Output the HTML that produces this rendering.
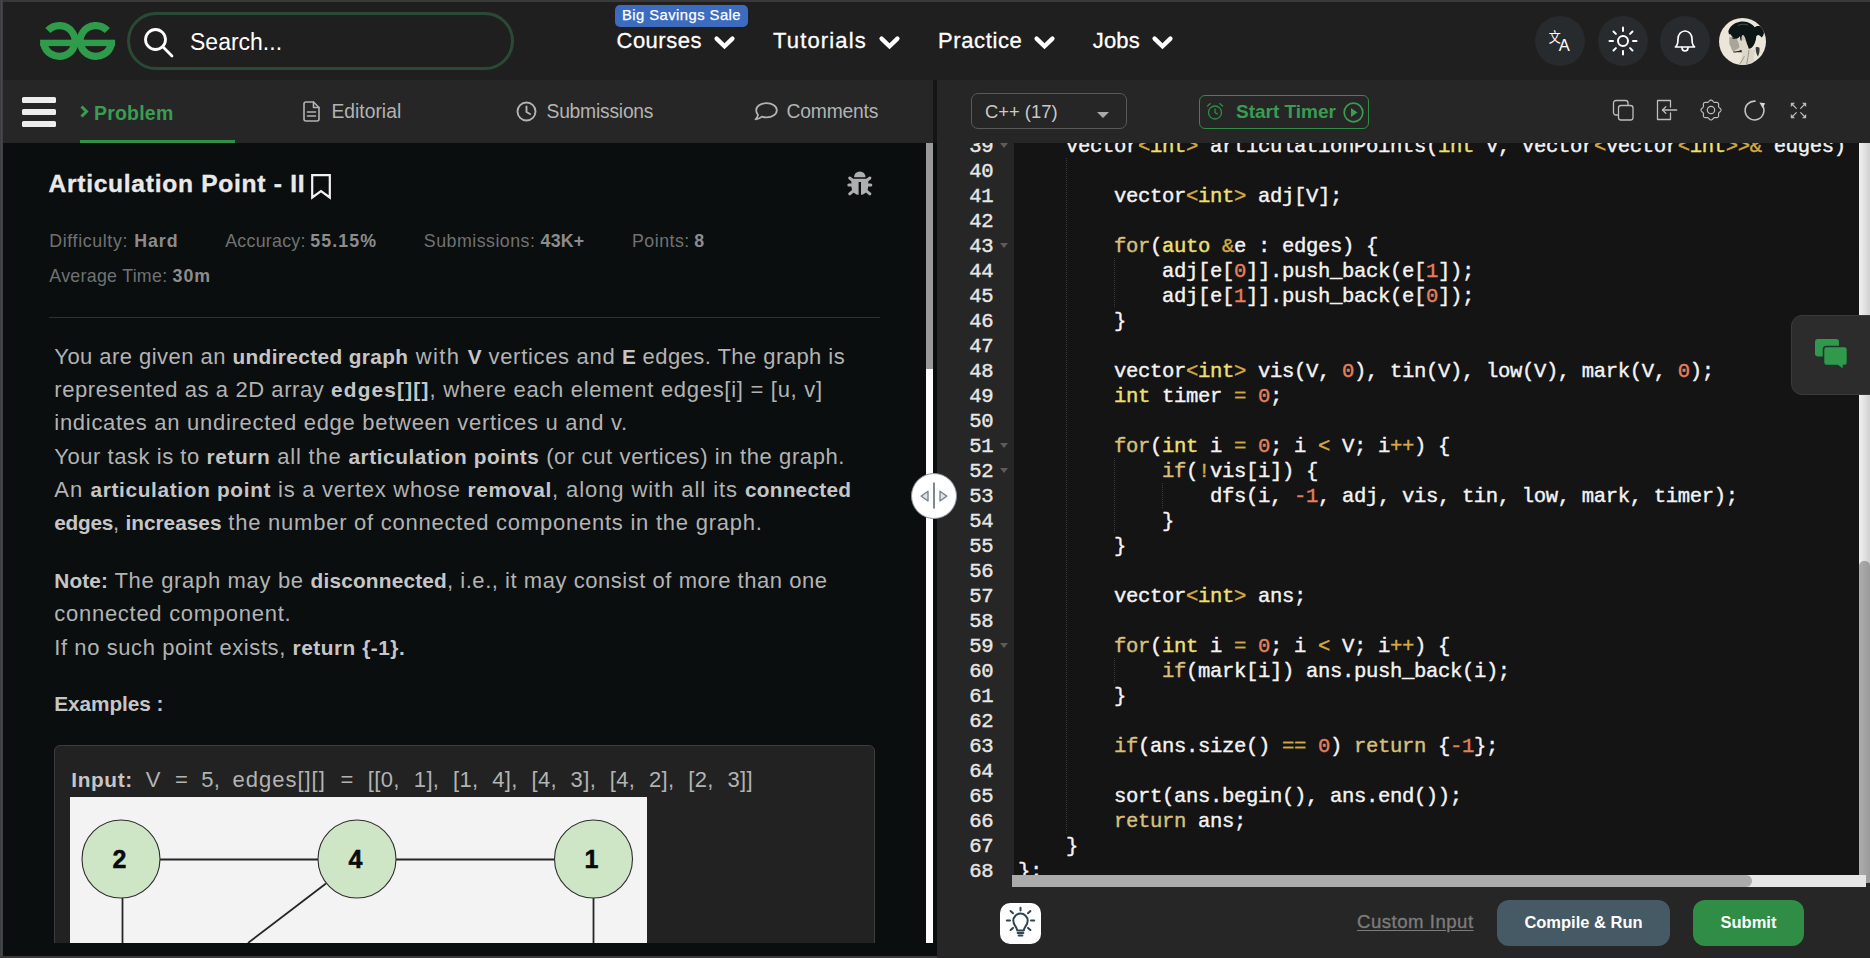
<!DOCTYPE html>
<html lang="en">
<head>
<meta charset="utf-8">
<title>Articulation Point - II | Practice | GeeksforGeeks</title>
<style>
*{box-sizing:border-box;margin:0;padding:0}
html,body{width:1870px;height:958px;overflow:hidden;background:#262626}
body{position:relative;font-family:"Liberation Sans",sans-serif;color:#fff}
.abs{position:absolute}
svg{display:block;overflow:visible}
/* window frame */
#frameTop{left:0;top:0;width:1870px;height:2px;background:#39393c}
#frameLeft{left:0;top:0;width:3px;height:958px;background:linear-gradient(to right,#38393c,#47484b 50%,#3a3b3e)}
#frameBot{left:0;top:956px;width:937px;height:2px;background:#3a3a3a}
/* header */
#hdr{left:3px;top:2px;width:1867px;height:78px;background:#1f1f1f}
#search{left:127px;top:12px;width:387px;height:58px;border:3px solid #2a4a35;border-radius:29px;background:#1f1f1f}
#searchTxt{left:190px;top:27px;font-size:23px;line-height:30px;color:#fff;white-space:nowrap}
.nav{font-size:22px;line-height:30px;color:#fff;white-space:nowrap;top:25.5px;-webkit-text-stroke:0.3px #fff}
#badge{left:615px;top:5px;width:133px;height:22px;border-radius:5px;background:#3c6cc0;color:#fff;font-size:14.8px;line-height:21px;text-align:center;white-space:nowrap;letter-spacing:0.45px;-webkit-text-stroke:0.25px #fff}
.cbtn{width:50px;height:50px;border-radius:50%;background:#282b2e;top:16px}
/* tab bar */
#tabs{left:3px;top:80px;width:930px;height:63px;background:#262626}
.tab{font-size:19.3px;line-height:24px;color:#b3b3b3;white-space:nowrap;top:100px}
#tabProblem{left:94px;top:100.7px;letter-spacing:0.2px;color:#3a9c52;font-weight:bold;font-size:19.5px;line-height:24px;white-space:nowrap}
#tabLine{left:80px;top:140px;width:155px;height:3px;background:#2f9148}
.bar{left:21.5px;width:34.5px;height:5.5px;border-radius:1.5px;background:#ededed}
/* left panel */
#left{left:3px;top:143px;width:934px;height:813px;background:#0b0e0f;overflow:hidden}
#lscroll{left:926px;top:143px;width:7px;height:800px;background:#fdfdfd}
#lthumb{left:926px;top:143px;width:7px;height:226px;background:#9a9a9a}
.ttl{font-size:24.6px;line-height:32px;font-weight:bold;color:#e9e9e9;white-space:pre;-webkit-text-stroke:0.35px #e9e9e9}
.meta{font-size:17.8px;line-height:24px;color:#707272;white-space:pre}
.meta b{color:#8c8c8c}
#hr{left:49px;top:317px;width:831px;height:1px;background:#2e3031}
.ln{font-size:22px;line-height:33px;color:#b2b3b3;white-space:pre}
.ln b{color:#c6c6c6;font-size:20.8px}
#exbox{left:54px;top:745px;width:821px;height:240px;background:#222222;border:1px solid #3d3d3d;border-radius:6px}
#eximg{left:70px;top:797px;width:577px;height:146px;background:#f3f3f3;overflow:hidden}
#lfade{left:3px;top:943px;width:934px;height:13px;background:#0b0e0f}
/* right panel */
#right{left:937px;top:80px;width:933px;height:878px;background:#262626;border-top-left-radius:7px}
#gap{left:933px;top:80px;width:4px;height:63px;background:#151515}
#editor{left:1014px;top:143px;width:845px;height:733px;background:#141414;overflow:hidden}
#gutter{left:937px;top:143px;width:77px;height:744px;background:#262626;overflow:hidden}
.cl{left:4px;-webkit-text-stroke:0.4px;height:25px;font-family:"Liberation Mono",monospace;font-size:20.6px;letter-spacing:-0.362px;line-height:25px;color:#f3f3f3;white-space:pre}
.gn{left:0.7px;-webkit-text-stroke:0.4px;width:55.5px;height:25px;text-align:right;font-family:"Liberation Mono",monospace;font-size:20.6px;letter-spacing:-0.362px;line-height:25px;color:#e6e6e6;white-space:pre}
.k1{color:#d8c07c}.k2{color:#efe070}.o{color:#d3a843}.n{color:#e57f5b}
.fold{left:63px;width:0;height:0;border-left:4px solid transparent;border-right:4px solid transparent;border-top:5px solid #5c5c5c}
.guide{width:1px;background:repeating-linear-gradient(to bottom,#3a3a3a 0,#3a3a3a 1px,transparent 1px,transparent 2px)}
#vscroll{left:1859px;top:143px;width:11px;height:740px;background:linear-gradient(to right,#f2f2f2,#cfcfcf)}
#vthumb{left:1859px;top:561px;width:11px;height:322px;background:linear-gradient(to right,#adadad,#9a9a9a);border-radius:5px 5px 0 0}
#hscroll{left:1012px;top:875px;width:854px;height:12px;background:#e6e6e6}
#hthumb{left:1012px;top:875px;width:740px;height:12px;background:#ababab;border-radius:0 6px 6px 0}
#chat{left:1791px;top:315px;width:90px;height:80px;background:#2c2c2c;border:1px solid #3b3b3b;border-radius:11px}
#langsel{left:971px;top:93px;width:156px;height:36px;border:1px solid #595959;border-radius:7px}
#langtxt{left:985px;top:98.5px;font-size:18.4px;line-height:26px;color:#c9c9c9;white-space:nowrap}
#timer{left:1199px;top:95px;width:170px;height:34px;border:1.5px solid #2f8d46;border-radius:6px}
#timertxt{left:1236px;top:99px;font-size:19px;line-height:26px;font-weight:bold;color:#3a9c52;white-space:nowrap}
#bulb{left:999.800px;top:902.500px;width:41px;height:41px;background:#fff;border-radius:10px}
#custom{left:1357px;top:910px;font-size:18.6px;letter-spacing:0.5px;line-height:24px;color:#7c7c7c;white-space:nowrap;text-decoration:underline;text-underline-offset:2px;-webkit-text-stroke:0.35px #7c7c7c}
.btn{top:900px;height:46px;border-radius:12px;color:#fff;font-weight:bold;font-size:16.5px;line-height:45px;text-align:center;white-space:nowrap}
#handle{left:911px;top:473px;width:46px;height:46px;border-radius:50%;background:#fff;border:1px solid #8d969d}
</style>
</head>
<body>
<div id="hdr" class="abs"></div>
<!-- logo -->
<svg class="abs" style="left:40px;top:22px" width="76" height="38" viewBox="0 0 76 38">
  <g fill="none" stroke="#2f9c4c" stroke-width="7.200">
    <path d="M3.73 21.01 A15.75 15.40 0 1 0 7.83 8.50"/>
    <path d="M71.47 21.01 A15.75 15.40 0 1 1 67.37 8.50"/>
  </g>
  <rect x="0.100" y="17.700" width="35" height="6.400" fill="#2f9c4c"/>
  <rect x="40.100" y="17.700" width="35" height="6.400" fill="#2f9c4c"/>
</svg>
<div id="search" class="abs"></div>
<svg class="abs" style="left:142px;top:26px" width="34" height="34" viewBox="0 0 34 34">
  <circle cx="13.5" cy="13.5" r="10" fill="none" stroke="#fff" stroke-width="2.8"/>
  <path d="M20.800 20.800 L30 30" stroke="#fff" stroke-width="2.8" stroke-linecap="round"/>
</svg>
<div id="searchTxt" class="abs">Search...</div>
<div id="badge" class="abs">Big Savings Sale</div>
<div class="abs nav" style="left:616.5px;letter-spacing:0.5px">Courses</div>
<svg class="abs" style="left:714px;top:35.700px" width="21" height="14" viewBox="0 0 21 14"><path d="M2.600 2.600 L10.500 10.300 L18.400 2.600" fill="none" stroke="#fff" stroke-width="4.400" stroke-linecap="round" stroke-linejoin="miter"/></svg>
<div class="abs nav" style="left:773px;letter-spacing:1.15px">Tutorials</div>
<svg class="abs" style="left:879px;top:35.700px" width="21" height="14" viewBox="0 0 21 14"><path d="M2.600 2.600 L10.500 10.300 L18.400 2.600" fill="none" stroke="#fff" stroke-width="4.400" stroke-linecap="round" stroke-linejoin="miter"/></svg>
<div class="abs nav" style="left:938px;letter-spacing:0.62px">Practice</div>
<svg class="abs" style="left:1034px;top:35.700px" width="21" height="14" viewBox="0 0 21 14"><path d="M2.600 2.600 L10.500 10.300 L18.400 2.600" fill="none" stroke="#fff" stroke-width="4.400" stroke-linecap="round" stroke-linejoin="miter"/></svg>
<div class="abs nav" style="left:1092.7px;letter-spacing:0.2px">Jobs</div>
<svg class="abs" style="left:1152px;top:35.700px" width="21" height="14" viewBox="0 0 21 14"><path d="M2.600 2.600 L10.500 10.300 L18.400 2.600" fill="none" stroke="#fff" stroke-width="4.400" stroke-linecap="round" stroke-linejoin="miter"/></svg>
<!-- round buttons -->
<div class="abs cbtn" style="left:1535px"></div>
<div class="abs cbtn" style="left:1598px"></div>
<div class="abs cbtn" style="left:1660px"></div>
<!-- translate icon -->
<svg class="abs" style="left:1548px;top:28px" width="24" height="26" viewBox="0 0 24 26">
  <text transform="translate(0.800,13.600) scale(0.860,1)" font-family="Liberation Sans, Noto Sans CJK SC, sans-serif" font-size="14" fill="#fff">文</text>
  <text x="10.700" y="23" font-family="Liberation Sans, sans-serif" font-size="16.500" fill="#fff">A</text>
</svg>
<!-- sun icon -->
<svg class="abs" style="left:1608px;top:26px" width="30" height="30" viewBox="0 0 30 30">
  <g fill="none" stroke="#fff" stroke-width="2" stroke-linecap="round">
    <circle cx="15" cy="15" r="5"/>
    <path d="M15 1.5 V5"/><path d="M15 25 V28.5"/><path d="M1.5 15 H5"/><path d="M25 15 H28.5"/>
    <path d="M5.5 5.5 L7.9 7.9"/><path d="M22.1 22.1 L24.5 24.5"/><path d="M5.5 24.5 L7.9 22.1"/><path d="M22.1 7.9 L24.5 5.5"/>
  </g>
</svg>
<!-- bell icon -->
<svg class="abs" style="left:1674px;top:29px" width="22" height="24" viewBox="0 0 22 24">
  <g fill="none" stroke="#fff" stroke-width="1.7" stroke-linecap="round" stroke-linejoin="round">
    <path d="M1.5 18 C4 16 4 13 4 10 C4 5.5 7 2 11 2 C15 2 18 5.5 18 10 C18 13 18 16 20.5 18 Z"/>
    <path d="M8 18.5 C8 20.5 9.3 22 11 22 C12.7 22 14 20.5 14 18.5"/>
  </g>
</svg>
<!-- avatar -->
<svg class="abs" style="left:1719px;top:18px" width="47" height="47" viewBox="0 0 47 47">
  <defs><clipPath id="avc"><circle cx="23.5" cy="23.5" r="23.5"/></clipPath>
  <filter id="avb" x="-10%" y="-10%" width="120%" height="120%"><feGaussianBlur stdDeviation="0.6"/></filter></defs>
  <g clip-path="url(#avc)">
    <rect width="47" height="47" fill="#ebe6d9"/>
    <g filter="url(#avb)">
      <path d="M10.300 15 C9.800 17 9.800 19 10.200 21 C9.600 23.500 9.800 25.500 10.600 27 C11.200 28.500 11.800 29.500 12 30.500 C12.200 32 13 33 14.100 33.400 C17 33.400 20.500 33 23 31.500 C23.500 35 22.500 40 20.400 47 L35 47 C34.500 42 35 37 36.500 32 C34 31.500 31.500 31 29.700 30.700 L26.600 21.900 L21 17 Z" fill="#ddd7c9"/>
      <path d="M10.300 19.500 C12 19 15 19.300 17.500 20.800 C19 23 20 26 20.500 29 C19 31 16.500 32.600 14.100 33.200 C12.800 32 12.200 30.500 12 29 C11 27.500 10.300 26 10.400 24 C10.600 22.500 10.500 21 10.300 19.500 Z" fill="#a9a59a"/>
      <path d="M12.500 19.600 C14 19.200 16 19.600 17 20.800 C15.500 21.400 13.800 21.200 12.500 19.600 Z" fill="#2c2e2c"/>
      <ellipse cx="24.300" cy="19.800" rx="1.700" ry="2.800" fill="#c9c4b7"/>
      <path d="M9.400 13.100 C10 10.500 12.500 7 16.600 5 C19 3.800 22 3.300 24.100 3.400 C27 3.400 29 4.200 30.400 5 C32.800 6.200 34.600 7.600 35.600 9.200 C37 8.200 39 7.600 40.400 8.100 C42.200 8.600 43.500 9.400 44.100 10.600 C45 12.300 45.200 14 44.800 15.700 C44.400 17.200 43.800 18.500 42.900 19.400 C41.800 18.200 40.500 17.200 39.100 16.900 C38.400 17.200 37.800 17.700 37.300 18.200 C37.200 20.500 36.800 22.500 36 24.400 C35.200 26.500 34.200 28.200 32.900 29.400 C31.800 30.200 30.700 30.700 29.700 30.700 C29.300 29 28.700 27.300 27.900 25.700 C27.600 24.300 27.200 23 26.600 21.900 C26.400 20 25.600 18.200 24.300 17 C23.200 17.200 22.400 18.200 22.600 19.600 C22.800 21 22.600 22.200 22.200 23.200 C21.400 21.800 21 20 21 18.200 C20 19.200 19 20.100 17.800 20.700 C16.500 20.600 15.200 20.100 14.100 19.400 C13.100 18.500 12.300 17.400 11.600 16.300 C10.800 16.600 10.200 16.200 9.800 15.400 C9.500 14.700 9.400 13.900 9.400 13.100 Z" fill="#111615"/>
      <path d="M14.100 33.300 C17 33.600 20 33 22.300 31.800 C22.900 32.600 23 33.600 22.600 34.600 C20 33.900 17 34.800 14.600 34.400 Z" fill="#232624"/>
      <path d="M36.600 29.400 C38 28.600 39.600 28.800 40.400 29.800 C40.800 33 40.400 36 38.800 38.400 C37.400 36 36.600 33 36.600 29.400 Z" fill="#3b3b37"/>
      <path d="M25.400 38.200 C24 41 22.400 44 20.400 46.500 M30 32 C29.400 37 28.600 42 27.600 47" fill="none" stroke="#9a968b" stroke-width="1"/>
      <path d="M19 7.500 C22 6 26 5.800 29 7" fill="none" stroke="#4d5653" stroke-width="0.900"/>
    </g>
  </g>
</svg>
<div id="tabs" class="abs"></div>
<div id="gap" class="abs"></div>
<div class="abs bar" style="top:97px"></div>
<div class="abs bar" style="top:109px"></div>
<div class="abs bar" style="top:121px"></div>
<svg class="abs" style="left:80px;top:105px" width="9" height="13" viewBox="0 0 9 13"><path d="M1.5 1.5 L6.5 6.5 L1.5 11.5" fill="none" stroke="#3a9c52" stroke-width="3" /></svg>
<div id="tabProblem" class="abs">Problem</div>
<div id="tabLine" class="abs"></div>
<!-- Editorial -->
<svg class="abs" style="left:303px;top:101px" width="17" height="21" viewBox="0 0 17 21">
  <g fill="none" stroke="#b3b3b3" stroke-width="1.6" stroke-linejoin="round" stroke-linecap="round">
    <path d="M3 1 H10.5 L16 6.5 V18 A2 2 0 0 1 14 20 H3 A2 2 0 0 1 1 18 V3 A2 2 0 0 1 3 1 Z"/>
    <path d="M10.5 1 V6.5 H16"/><path d="M4.5 11 H12.5"/><path d="M4.5 15 H12.5"/>
  </g>
</svg>
<div class="abs tab" style="left:331.5px">Editorial</div>
<!-- Submissions -->
<svg class="abs" style="left:516px;top:101px" width="21" height="21" viewBox="0 0 21 21">
  <g fill="none" stroke="#b3b3b3" stroke-width="1.9" stroke-linecap="round" stroke-linejoin="round">
    <circle cx="10.5" cy="10.5" r="9"/><path d="M10.5 5.5 V11 L14 13"/>
  </g>
</svg>
<div class="abs tab" style="left:546.5px;letter-spacing:-0.23px">Submissions</div>
<!-- Comments -->
<svg class="abs" style="left:754px;top:102px" width="24" height="19" viewBox="0 0 24 19">
  <path d="M12.5 1.2 C18.5 1.2 22.8 4.3 22.8 8.3 C22.8 12.3 18.5 15.4 12.5 15.4 C10.8 15.4 9.3 15.2 7.9 14.7 C6.3 16.2 4 17.2 1.5 17.4 C3 16 3.8 14.4 4 12.8 C2.8 11.6 2.2 10 2.2 8.3 C2.2 4.3 6.5 1.2 12.5 1.2 Z" fill="none" stroke="#b3b3b3" stroke-width="1.8" stroke-linejoin="round"/>
</svg>
<div class="abs tab" style="left:786.5px;letter-spacing:-0.19px">Comments</div>
<div id="left" class="abs"></div>
<svg class="abs" style="left:311px;top:174px" width="20" height="26" viewBox="0 0 20 26"><path d="M1.2 1.2 H18.8 V23.5 L10 17.2 L1.2 23.5 Z" fill="none" stroke="#f2f2f2" stroke-width="2.2" stroke-linejoin="miter"/></svg>
<!-- bug icon -->
<svg class="abs" style="left:847px;top:171px" width="26" height="26" viewBox="0 0 26 26">
  <g fill="none" stroke="#adafb0" stroke-width="3" stroke-linecap="round">
    <path d="M1.800 14 H23.800"/>
    <path d="M2.700 7 L7 10.500"/><path d="M22.900 7 L18.600 10.500"/>
    <path d="M2.700 22.800 L7 19.300"/><path d="M22.900 22.800 L18.600 19.300"/>
  </g>
  <path d="M7 6.200 A5.800 5.800 0 0 1 18.600 6.200 Z" fill="#adafb0"/>
  <path d="M4.400 7.800 H21.200 V16 A8.400 8 0 0 1 4.400 16 Z" fill="#adafb0"/>
  <rect x="11.600" y="11" width="2.400" height="14" fill="#0b0e0f"/>
</svg>
<div id="hr" class="abs"></div>
<div id="exbox" class="abs"></div>
<div id="eximg" class="abs">
  <svg width="577" height="146" viewBox="0 0 577 146">
    <g stroke="#262626" stroke-width="1.800" fill="none">
      <path d="M90 62.500 H248"/><path d="M326 62.500 H484"/>
      <path d="M52.500 101 V146"/><path d="M523.500 101 V146"/>
      <path d="M256 86.500 L178 146"/>
    </g>
    <g fill="#cfe6c6" stroke="#2e2e2e" stroke-width="1.1">
      <circle cx="51" cy="62" r="39"/><circle cx="287" cy="62" r="39"/><circle cx="523.500" cy="62" r="39"/>
    </g>
    <g font-family="Liberation Sans, sans-serif" font-weight="bold" font-size="25" fill="#0a0a0a" stroke="#0a0a0a" stroke-width="0.500" text-anchor="middle">
      <text x="49.500" y="71">2</text><text x="285.500" y="71">4</text><text x="521.500" y="71">1</text>
    </g>
  </svg>
</div>
<div class="abs ln" id="L1" style="left:54.3px;top:339.9px"><span style="letter-spacing:0.45px">You are given an </span><b style="letter-spacing:0.38px">undirected graph</b><span style="letter-spacing:1.36px"> with </span><b style="letter-spacing:0.00px">V</b><span style="letter-spacing:0.68px"> vertices and </span><b style="letter-spacing:0.00px">E</b><span style="letter-spacing:0.45px"> edges. The graph is</span></div>
<div class="abs ln" id="L2" style="left:54.3px;top:373.1px"><span style="letter-spacing:0.58px">represented as a 2D array </span><b style="letter-spacing:1.18px">edges[][]</b><span style="letter-spacing:0.71px">, where each element edges[i] = [u, v]</span></div>
<div class="abs ln" id="L3" style="left:54.3px;top:406.4px"><span style="letter-spacing:0.71px">indicates an undirected edge between vertices u and v.</span></div>
<div class="abs ln" id="L4" style="left:54.3px;top:439.7px"><span style="letter-spacing:0.54px">Your task is to </span><b style="letter-spacing:0.65px">return</b><span style="letter-spacing:0.78px"> all the </span><b style="letter-spacing:0.57px">articulation points</b><span style="letter-spacing:0.61px"> (or cut vertices) in the graph.</span></div>
<div class="abs ln" id="L5" style="left:54.3px;top:473.1px"><span style="letter-spacing:1.02px">An </span><b style="letter-spacing:0.67px">articulation point</b><span style="letter-spacing:0.75px"> is a vertex whose </span><b style="letter-spacing:0.66px">removal</b><span style="letter-spacing:0.92px">, along with all its </span><b style="letter-spacing:0.25px">connected</b></div>
<div class="abs ln" id="L6" style="left:54.3px;top:506.3px"><b style="letter-spacing:-0.28px">edges</b><span style="letter-spacing:0.08px">, </span><b style="letter-spacing:0.01px">increases</b><span style="letter-spacing:0.76px"> the number of connected components in the graph.</span></div>
<div class="abs ln" id="L7" style="left:54.3px;top:563.7px"><b style="letter-spacing:0.13px">Note:</b><span style="letter-spacing:0.67px"> The graph may be </span><b style="letter-spacing:0.20px">disconnected</b><span style="letter-spacing:0.54px">, i.e., it may consist of more than one</span></div>
<div class="abs ln" id="L8" style="left:54.3px;top:597.2px"><span style="letter-spacing:0.72px">connected component.</span></div>
<div class="abs ln" id="L9" style="left:54.3px;top:630.7px"><span style="letter-spacing:0.58px">If no such point exists, </span><b style="letter-spacing:0.53px">return {-1}.</b></div>
<div class="abs ln" id="L10" style="left:54.3px;top:687.4px"><b style="letter-spacing:-0.08px">Examples :</b></div>
<div class="abs ln" id="L11" style="left:71.3px;top:763.0px"><b style="letter-spacing:0.63px">Input:</b><span style="display:inline-block;width:13.0px"> </span><span style="letter-spacing:0.35px;word-spacing:7.70px">V </span><span style="letter-spacing:0.35px;word-spacing:6.53px">= </span><span style="letter-spacing:0.35px;word-spacing:5.88px">5, </span><span style="letter-spacing:0.97px">edges[][]</span><span style="display:inline-block;width:14.7px"> </span><span style="letter-spacing:0.35px;word-spacing:7.73px">= </span><span style="letter-spacing:0.35px;word-spacing:7.56px">[[0, </span><span style="letter-spacing:0.35px;word-spacing:7.23px">1], [1, 4], [4, 3], [4, 2], [2, 3]]</span></div>
<div class="abs meta" id="M1" style="left:49.3px;top:228.8px"><span style="letter-spacing:0.63px">Difficulty:</span><span style="display:inline-block;width:6.2px"> </span><b style="letter-spacing:0.93px">Hard</b></div>
<div class="abs meta" id="M2" style="left:225.2px;top:228.8px"><span style="letter-spacing:0.27px">Accuracy:</span><span style="display:inline-block;width:4.5px"> </span><b style="letter-spacing:1.10px">55.15%</b></div>
<div class="abs meta" id="M3" style="left:423.8px;top:228.8px"><span style="letter-spacing:0.49px">Submissions:</span><span style="display:inline-block;width:5.1px"> </span><b style="letter-spacing:0.23px">43K+</b></div>
<div class="abs meta" id="M4" style="left:632.0px;top:228.8px"><span style="letter-spacing:0.49px">Points:</span><span style="display:inline-block;width:4.5px"> </span><b style="letter-spacing:-0.29px">8</b></div>
<div class="abs meta" id="M5" style="left:49.3px;top:263.6px"><span style="letter-spacing:0.29px">Average Time:</span><span style="display:inline-block;width:5.0px"> </span><b style="letter-spacing:1.10px">30m</b></div>
<div class="abs ttl" id="T1" style="left:48.5px;top:168.0px"><b style="letter-spacing:0.71px">Articulation Point - II</b></div>
<div id="lfade" class="abs"></div>
<div id="lscroll" class="abs"></div>
<div id="lthumb" class="abs"></div>
<div id="right" class="abs"></div>
<div id="gutter" class="abs">
<div class="abs gn" style="top:-9.1px">39</div>
<div class="abs fold" style="top:-0.3px"></div>
<div class="abs gn" style="top:15.9px">40</div>
<div class="abs gn" style="top:40.9px">41</div>
<div class="abs gn" style="top:65.9px">42</div>
<div class="abs gn" style="top:90.9px">43</div>
<div class="abs fold" style="top:99.7px"></div>
<div class="abs gn" style="top:115.9px">44</div>
<div class="abs gn" style="top:140.9px">45</div>
<div class="abs gn" style="top:165.9px">46</div>
<div class="abs gn" style="top:190.9px">47</div>
<div class="abs gn" style="top:215.9px">48</div>
<div class="abs gn" style="top:240.9px">49</div>
<div class="abs gn" style="top:265.9px">50</div>
<div class="abs gn" style="top:290.9px">51</div>
<div class="abs fold" style="top:299.7px"></div>
<div class="abs gn" style="top:315.9px">52</div>
<div class="abs fold" style="top:324.7px"></div>
<div class="abs gn" style="top:340.9px">53</div>
<div class="abs gn" style="top:365.9px">54</div>
<div class="abs gn" style="top:390.9px">55</div>
<div class="abs gn" style="top:415.9px">56</div>
<div class="abs gn" style="top:440.9px">57</div>
<div class="abs gn" style="top:465.9px">58</div>
<div class="abs gn" style="top:490.9px">59</div>
<div class="abs fold" style="top:499.7px"></div>
<div class="abs gn" style="top:515.9px">60</div>
<div class="abs gn" style="top:540.9px">61</div>
<div class="abs gn" style="top:565.9px">62</div>
<div class="abs gn" style="top:590.9px">63</div>
<div class="abs gn" style="top:615.9px">64</div>
<div class="abs gn" style="top:640.9px">65</div>
<div class="abs gn" style="top:665.9px">66</div>
<div class="abs gn" style="top:690.9px">67</div>
<div class="abs gn" style="top:715.9px">68</div>
</div>
<div id="editor" class="abs">
<div class="abs guide" style="left:51.5px;top:15.2px;height:675.0px"></div>
<div class="abs guide" style="left:99.5px;top:115.2px;height:50.0px"></div>
<div class="abs guide" style="left:99.5px;top:315.2px;height:75.0px"></div>
<div class="abs guide" style="left:147.5px;top:340.2px;height:25.0px"></div>
<div class="abs guide" style="left:99.5px;top:515.2px;height:25.0px"></div>
<div class="abs cl" style="top:-9.1px">    vector<span class="o">&lt;</span><span class="k2">int</span><span class="o">&gt;</span> articulationPoints(<span class="k2">int</span> V, vector<span class="o">&lt;</span>vector<span class="o">&lt;</span><span class="k2">int</span><span class="o">&gt;</span><span class="o">&gt;</span><span class="o">&amp;</span> edges) {</div>
<div class="abs cl" style="top:40.9px">        vector<span class="o">&lt;</span><span class="k2">int</span><span class="o">&gt;</span> adj[V];</div>
<div class="abs cl" style="top:90.9px">        <span class="k1">for</span>(<span class="k2">auto</span> <span class="o">&amp;</span>e : edges) {</div>
<div class="abs cl" style="top:115.9px">            adj[e[<span class="n">0</span>]].push_back(e[<span class="n">1</span>]);</div>
<div class="abs cl" style="top:140.9px">            adj[e[<span class="n">1</span>]].push_back(e[<span class="n">0</span>]);</div>
<div class="abs cl" style="top:165.9px">        }</div>
<div class="abs cl" style="top:215.9px">        vector<span class="o">&lt;</span><span class="k2">int</span><span class="o">&gt;</span> vis(V, <span class="n">0</span>), tin(V), low(V), mark(V, <span class="n">0</span>);</div>
<div class="abs cl" style="top:240.9px">        <span class="k2">int</span> timer <span class="o">=</span> <span class="n">0</span>;</div>
<div class="abs cl" style="top:290.9px">        <span class="k1">for</span>(<span class="k2">int</span> i <span class="o">=</span> <span class="n">0</span>; i <span class="o">&lt;</span> V; i<span class="o">++</span>) {</div>
<div class="abs cl" style="top:315.9px">            <span class="k1">if</span>(<span class="o">!</span>vis[i]) {</div>
<div class="abs cl" style="top:340.9px">                dfs(i, <span class="n">-1</span>, adj, vis, tin, low, mark, timer);</div>
<div class="abs cl" style="top:365.9px">            }</div>
<div class="abs cl" style="top:390.9px">        }</div>
<div class="abs cl" style="top:440.9px">        vector<span class="o">&lt;</span><span class="k2">int</span><span class="o">&gt;</span> ans;</div>
<div class="abs cl" style="top:490.9px">        <span class="k1">for</span>(<span class="k2">int</span> i <span class="o">=</span> <span class="n">0</span>; i <span class="o">&lt;</span> V; i<span class="o">++</span>) {</div>
<div class="abs cl" style="top:515.9px">            <span class="k1">if</span>(mark[i]) ans.push_back(i);</div>
<div class="abs cl" style="top:540.9px">        }</div>
<div class="abs cl" style="top:590.9px">        <span class="k1">if</span>(ans.size() <span class="o">==</span> <span class="n">0</span>) <span class="k1">return</span> {<span class="n">-1</span>};</div>
<div class="abs cl" style="top:640.9px">        sort(ans.begin(), ans.end());</div>
<div class="abs cl" style="top:665.9px">        <span class="k1">return</span> ans;</div>
<div class="abs cl" style="top:690.9px">    }</div>
<div class="abs cl" style="top:715.9px">};</div>
</div>
<div id="langsel" class="abs"></div>
<div id="langtxt" class="abs">C++ (17)</div>
<div class="abs" style="left:1097px;top:112px;width:0;height:0;border-left:6px solid transparent;border-right:6px solid transparent;border-top:6px solid #a9a9a9"></div>
<div id="timer" class="abs"></div>
<!-- alarm clock -->
<svg class="abs" style="left:1206px;top:102px" width="18" height="19" viewBox="0 0 18 19">
  <g fill="none" stroke="#2f8d46" stroke-width="1.3" stroke-linecap="round">
    <circle cx="9" cy="10.500" r="6.500"/><path d="M9 6.800 V10.700 L11.500 12"/>
    <path d="M1.500 4 L4.200 1.600"/><path d="M16.500 4 L13.800 1.600"/>
  </g>
</svg>
<div id="timertxt" class="abs">Start Timer</div>
<svg class="abs" style="left:1343px;top:102px" width="21" height="21" viewBox="0 0 21 21">
  <circle cx="10.500" cy="10.500" r="9.300" fill="none" stroke="#3a9c52" stroke-width="1.700"/>
  <path d="M8 6 L14.500 10.500 L8 15 Z" fill="#3a9c52"/>
</svg>
<!-- toolbar icons -->
<svg class="abs" style="left:1612px;top:99px" width="22" height="22" viewBox="0 0 22 22">
  <g fill="none" stroke="#bdbdbd" stroke-width="1.300">
    <path d="M6.500 16 H4 A2.500 2.500 0 0 1 1.500 13.500 V4 A2.500 2.500 0 0 1 4 1.500 H13.500 A2.500 2.500 0 0 1 16 4 V6.500"/>
    <rect x="6.500" y="6.500" width="14.500" height="14.500" rx="2.500"/>
  </g>
</svg>
<svg class="abs" style="left:1656px;top:99px" width="23" height="22" viewBox="0 0 23 22">
  <g fill="none" stroke="#bdbdbd" stroke-width="1.300" stroke-linecap="round" stroke-linejoin="round">
    <path d="M14.500 8 V1.500 H1.500 V20.500 H14.500 V14"/>
    <path d="M20.700 11 H6.500"/><path d="M9.800 7.800 L6.500 11 L9.800 14.200"/>
  </g>
</svg>
<svg class="abs" style="left:1700.100px;top:99.100px" width="22" height="22" viewBox="0 0 22 22">
  <g fill="none" stroke="#bdbdbd" stroke-width="1.200" stroke-linejoin="round">
    <circle cx="11" cy="11" r="3.700"/>
    <path d="M11.00 1.00 L11.39 1.05 L11.77 1.19 L12.13 1.42 L12.47 1.70 L12.79 2.03 L13.07 2.36 L13.35 2.67 L13.62 2.95 L13.89 3.17 L14.18 3.33 L14.49 3.42 L14.84 3.46 L15.23 3.45 L15.64 3.42 L16.08 3.39 L16.53 3.38 L16.97 3.42 L17.39 3.52 L17.76 3.69 L18.07 3.93 L18.31 4.24 L18.48 4.61 L18.58 5.03 L18.62 5.47 L18.61 5.92 L18.58 6.36 L18.55 6.77 L18.54 7.16 L18.58 7.51 L18.67 7.82 L18.83 8.11 L19.05 8.38 L19.33 8.65 L19.64 8.93 L19.97 9.21 L20.30 9.53 L20.58 9.87 L20.81 10.23 L20.95 10.61 L21.00 11.00 L20.95 11.39 L20.81 11.77 L20.58 12.13 L20.30 12.47 L19.97 12.79 L19.64 13.07 L19.33 13.35 L19.05 13.62 L18.83 13.89 L18.67 14.18 L18.58 14.49 L18.54 14.84 L18.55 15.23 L18.58 15.64 L18.61 16.08 L18.62 16.53 L18.58 16.97 L18.48 17.39 L18.31 17.76 L18.07 18.07 L17.76 18.31 L17.39 18.48 L16.97 18.58 L16.53 18.62 L16.08 18.61 L15.64 18.58 L15.23 18.55 L14.84 18.54 L14.49 18.58 L14.18 18.67 L13.89 18.83 L13.62 19.05 L13.35 19.33 L13.07 19.64 L12.79 19.97 L12.47 20.30 L12.13 20.58 L11.77 20.81 L11.39 20.95 L11.00 21.00 L10.61 20.95 L10.23 20.81 L9.87 20.58 L9.53 20.30 L9.21 19.97 L8.93 19.64 L8.65 19.33 L8.38 19.05 L8.11 18.83 L7.82 18.67 L7.51 18.58 L7.16 18.54 L6.77 18.55 L6.36 18.58 L5.92 18.61 L5.47 18.62 L5.03 18.58 L4.61 18.48 L4.24 18.31 L3.93 18.07 L3.69 17.76 L3.52 17.39 L3.42 16.97 L3.38 16.53 L3.39 16.08 L3.42 15.64 L3.45 15.23 L3.46 14.84 L3.42 14.49 L3.33 14.18 L3.17 13.89 L2.95 13.62 L2.67 13.35 L2.36 13.07 L2.03 12.79 L1.70 12.47 L1.42 12.13 L1.19 11.77 L1.05 11.39 L1.00 11.00 L1.05 10.61 L1.19 10.23 L1.42 9.87 L1.70 9.53 L2.03 9.21 L2.36 8.93 L2.67 8.65 L2.95 8.38 L3.17 8.11 L3.33 7.82 L3.42 7.51 L3.46 7.16 L3.45 6.77 L3.42 6.36 L3.39 5.92 L3.38 5.47 L3.42 5.03 L3.52 4.61 L3.69 4.24 L3.93 3.93 L4.24 3.69 L4.61 3.52 L5.03 3.42 L5.47 3.38 L5.92 3.39 L6.36 3.42 L6.77 3.45 L7.16 3.46 L7.51 3.42 L7.82 3.33 L8.11 3.17 L8.38 2.95 L8.65 2.67 L8.93 2.36 L9.21 2.03 L9.53 1.70 L9.87 1.42 L10.23 1.19 L10.61 1.05 Z"/>
  </g>
</svg>
<svg class="abs" style="left:1742.800px;top:98.800px" width="23" height="23" viewBox="0 0 23 23">
  <path d="M12.650 2.170 A9.400 9.400 0 1 0 19.100 5.970" fill="none" stroke="#c4c4c4" stroke-width="1.600"/>
  <path d="M16.400 3.600 L22.200 4.200 L19.600 9 Z" fill="#d6d6d6"/>
</svg>
<svg class="abs" style="left:1790px;top:102px" width="17" height="17" viewBox="0 0 17 17">
  <g fill="none" stroke="#bdbdbd" stroke-width="1.200" stroke-linecap="round">
    <path d="M2 2 L6.300 6.300"/><path d="M15 2 L10.700 6.300"/><path d="M2 15 L6.300 10.700"/><path d="M15 15 L10.700 10.700"/>
  </g>
  <g fill="#bdbdbd"><path d="M0.800 0.800 H5 L0.800 5 Z"/><path d="M16.200 0.800 H12 L16.200 5 Z"/><path d="M0.800 16.200 H5 L0.800 12 Z"/><path d="M16.200 16.200 H12 L16.200 12 Z"/></g>
</svg>
<!-- scrollbars -->
<div id="vscroll" class="abs"></div>
<div id="vthumb" class="abs"></div>
<div id="hscroll" class="abs"></div>
<div id="hthumb" class="abs"></div>
<!-- chat -->
<div id="chat" class="abs"></div>
<svg class="abs" style="left:1814px;top:338px" width="35" height="33" viewBox="0 0 35 33">
  <rect x="1" y="1" width="24" height="17.500" rx="3" fill="#2f9a4c"/>
  <path d="M12.500 8.500 H30.500 A3 3 0 0 1 33.500 11.500 V24.500 A3 3 0 0 1 30.500 27.500 H29.500 V32 L23.500 27.500 H12.500 A3 3 0 0 1 9.500 24.500 V11.500 A3 3 0 0 1 12.500 8.500 Z" fill="#2f9a4c" stroke="#26302a" stroke-width="1.600"/>
</svg>
<!-- bottom bar -->
<div id="bulb" class="abs"></div>
<svg class="abs" style="left:1004.500px;top:906px" width="31" height="33" viewBox="0 0 31 33">
  <g fill="none" stroke="#2f4550" stroke-width="2" stroke-linecap="round" stroke-linejoin="round">
    <path d="M12.200 24.500 C12.200 21 8.300 19.500 8.300 14.800 A7.200 7.200 0 0 1 22.700 14.800 C22.700 19.500 18.800 21 18.800 24.500 Z"/>
    <path d="M12.600 27 H18.400"/><path d="M13.600 29.500 H17.400"/>
    <path d="M15.500 1.800 V4.600"/><path d="M1.800 14.500 H5"/><path d="M26 14.500 H29.200"/>
    <path d="M5.600 5 L8 7.300"/><path d="M25.400 5 L23 7.300"/>
    <path d="M5.600 24 L8 21.900"/><path d="M25.400 24 L23 21.900"/>
  </g>
</svg>
<div id="custom" class="abs">Custom Input</div>
<div class="abs btn" style="left:1497px;width:173px;background:#455a64">Compile &amp; Run</div>
<div class="abs btn" style="left:1693px;width:111px;background:#2f8d46">Submit</div>
<!-- resize handle -->
<div id="handle" class="abs"></div>
<svg class="abs" style="left:919px;top:481px" width="30" height="30" viewBox="0 0 30 30">
  <path d="M15 1.500 V27.500" stroke="#66737e" stroke-width="1.700" fill="none"/>
  <path d="M9 10.200 V20 L2.200 15.100 Z" fill="#dfe3e6" stroke="#7a8792" stroke-width="1.400" stroke-linejoin="round"/>
  <path d="M21 10.200 V20 L27.800 15.100 Z" fill="#dfe3e6" stroke="#7a8792" stroke-width="1.400" stroke-linejoin="round"/>
</svg>
<div id="frameTop" class="abs"></div>
<div id="frameLeft" class="abs"></div>
<div id="frameBot" class="abs"></div>
</body>
</html>
